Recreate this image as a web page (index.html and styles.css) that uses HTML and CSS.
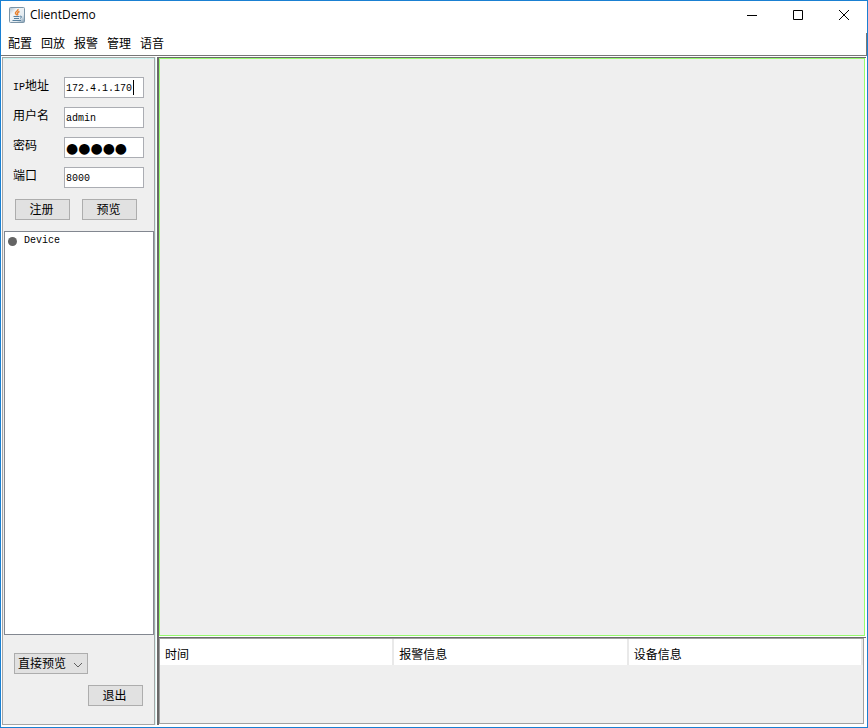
FILE: index.html
```html
<!DOCTYPE html>
<html lang="zh-CN">
<head>
<meta charset="utf-8">
<title>ClientDemo</title>
<link rel="stylesheet" href="styles.css">
</head>
<body>
<div class="window">
  <header class="titlebar">
    <svg class="app-icon" viewBox="0 0 16 16" aria-hidden="true">
      <defs>
        <linearGradient id="tile" x1="0" y1="0" x2="1" y2="1">
          <stop offset="0" stop-color="#a9bdcb"/>
          <stop offset="0.3" stop-color="#f1f5f7"/>
          <stop offset="0.7" stop-color="#e4ebf0"/>
          <stop offset="1" stop-color="#7796ae"/>
        </linearGradient>
      </defs>
      <rect x="0.5" y="0.5" width="15" height="15" rx="1" fill="url(#tile)" stroke="#7b94a7"/>
      <path d="M9 2c.8 1.700-2.600 2.500-2.600 4.100 0 .9 1 1.300 1.400 2.200M10.500 4.500C9 5.100 8.100 5.800 8.600 6.700c.4.700.2 1.100-.3 1.700" fill="none" stroke="#e8812e" stroke-width="1.400"/>
      <path d="M4.500 9.500h6M5 11.500h5M3.500 13.500h8.500M11 9.200c2.200-.4 2 1.500 0 2.100" fill="none" stroke="#56809f" stroke-width="1"/>
    </svg>
    <h1 class="title">ClientDemo</h1>
    <div class="controls">
      <button class="control" aria-label="最小化"><svg viewBox="0 0 10 10"><path d="M0 5.500h10"/></svg></button>
      <button class="control" aria-label="最大化"><svg viewBox="0 0 10 10"><path d="M.5.500h9v9h-9z"/></svg></button>
      <button class="control" aria-label="关闭"><svg viewBox="0 0 10 10"><path d="M0 0l10 10M10 0L0 10"/></svg></button>
    </div>
  </header>
  <nav class="menubar">
    <button>配置</button><button>回放</button><button>报警</button><button>管理</button><button>语音</button>
  </nav>
  <main class="content">
    <aside class="sidebar">
      <form class="login">
        <div class="field"><label for="ip"><span class="latin">IP</span>地址</label><div class="box"><input id="ip" type="text" value="172.4.1.170"><span class="caret"></span></div></div>
        <div class="field"><label for="user">用户名</label><div class="box"><input id="user" type="text" value="admin"></div></div>
        <div class="field"><label for="pass">密码</label><div class="box"><input id="pass" class="secret" type="text" value="●●●●●"></div></div>
        <div class="field"><label for="port">端口</label><div class="box"><input id="port" type="text" value="8000"></div></div>
        <div class="actions">
          <button type="button" class="btn">注册</button>
          <button type="button" class="btn">预览</button>
        </div>
      </form>
      <ul class="tree">
        <li><span class="dot"></span>Device</li>
      </ul>
      <div class="footer">
        <div class="picker">
          <select aria-label="预览方式"><option>直接预览</option></select>
          <svg viewBox="0 0 10 6" aria-hidden="true"><path d="M1 1l4 4 4-4"/></svg>
        </div>
        <button type="button" class="btn exit">退出</button>
      </div>
    </aside>
    <section class="workspace">
      <div class="preview"></div>
      <div class="alarms">
        <table>
          <thead><tr><th>时间</th><th>报警信息</th><th>设备信息</th></tr></thead>
        </table>
      </div>
    </section>
  </main>
</div>
</body>
</html>
```
FILE: styles.css
```css
* {
  box-sizing: border-box;
}

body {
  margin: 0;
  font: 12px/16px "Liberation Mono", "Noto Sans CJK SC", monospace;
  color: #000;
}

button,
input,
select {
  font: inherit;
  color: inherit;
  margin: 0;
}

.window {
  display: flex;
  flex-direction: column;
  min-height: 100vh;
  border: 1px solid #1a80d2;
  background: #fff;
}

.titlebar {
  display: flex;
  align-items: center;
  height: 28px;
  padding-left: 8px;
}

.app-icon {
  width: 16px;
  height: 16px;
}

.title {
  margin: 0 auto 0 5px;
  font: 12px/14px "Open Sans", sans-serif;
}

.controls {
  display: flex;
}

.control {
  width: 46px;
  height: 28px;
  padding: 0;
  border: 0;
  background: none;
  display: grid;
  place-items: center;
}

.control svg {
  width: 10px;
  height: 10px;
  fill: none;
  stroke: #000;
  overflow: visible;
}

.menubar {
  display: flex;
  gap: 9px;
  height: 23px;
  margin-top: 4px;
  padding-left: 7px;
  border-right: 1px solid #777;
  border-bottom: 1px solid #777;
}

.menubar button {
  padding: 2px 0 0;
  border: 0;
  background: none;
}

.content {
  flex: 1;
  display: flex;
  gap: 2px;
  padding: 1px 1px 2px 1px;
}

.sidebar {
  display: flex;
  flex-direction: column;
  width: 153px;
  border: 1px solid #a5a5a5;
  box-shadow: 1px 0 #d8f3f0, inset 0 1px #c8f5f0;
  background: #efefef;
}

.login {
  padding: 16px 10px 11px 10px;
}

.field {
  display: flex;
  justify-content: space-between;
  height: 30px;
}

.field label {
  line-height: 26px;
}

.latin {
  font-size: 10px;
}

.box {
  position: relative;
  width: 80px;
  height: 21px;
  margin-top: 3px;
}

.box input {
  width: 100%;
  height: 100%;
  padding: 1px 1px 0;
  border: 1px solid #abadb3;
  border-radius: 0;
  background: #fff;
  font-size: 10px;
  display: block;
}

.box .secret {
  font: 14px/18px "DejaVu Sans", sans-serif;
}

.caret {
  position: absolute;
  left: 69px;
  top: 3px;
  width: 1px;
  height: 15px;
  background: #000;
}

.actions {
  display: flex;
  gap: 12px;
  padding: 5px 0 0 2px;
}

.btn {
  width: 55px;
  height: 21px;
  padding: 3px 2px 0 0;
  border: 1px solid #adadad;
  background: #e1e1e1;
}

.tree {
  flex: 1;
  margin: 0 0 0 1px;
  padding: 1px 3px;
  list-style: none;
  border: 1px solid #828790;
  background: #fff;
  font-size: 10px;
}

.tree li {
  display: flex;
  align-items: center;
  gap: 7px;
}

.dot {
  width: 9px;
  height: 9px;
  border-radius: 50%;
  background: #646464;
}

.footer {
  display: flex;
  flex-direction: column;
  gap: 11px;
  padding: 18px 11px;
}

.picker {
  position: relative;
  width: 74px;
  height: 21px;
}

.picker select {
  width: 100%;
  height: 100%;
  padding: 3px 0 0 3px;
  appearance: none;
  border: 1px solid #adadad;
  border-radius: 0;
  background: #e1e1e1;
}

.picker svg {
  position: absolute;
  right: 5px;
  top: 9px;
  width: 10px;
  height: 6px;
  fill: none;
  stroke: #606060;
  pointer-events: none;
}

.exit {
  align-self: flex-end;
}

.workspace {
  flex: 1;
  display: flex;
  flex-direction: column;
  border-top: 1px solid #696969;
  border-left: 2px solid #696969;
}

.preview {
  flex: 1;
  margin-right: 1px;
  border: 1px solid #96fa6e;
  background: #efefef;
}

.alarms {
  height: 88px;
  margin-top: 1px;
  border-top: 1px solid #696969;
}

.alarms table {
  width: calc(100% - 2px);
  height: 86px;
  border: 1px solid #a0a0a0;
  border-spacing: 0;
  table-layout: fixed;
  background: linear-gradient(#fff 26px, #efefef 26px);
}

.alarms thead {
  vertical-align: top;
}

.alarms th {
  padding: 9px 5px 0;
  font-weight: normal;
  text-align: left;
  background: linear-gradient(#e9e9e9, #e9e9e9) right top / 2px 26px no-repeat;
}
```
